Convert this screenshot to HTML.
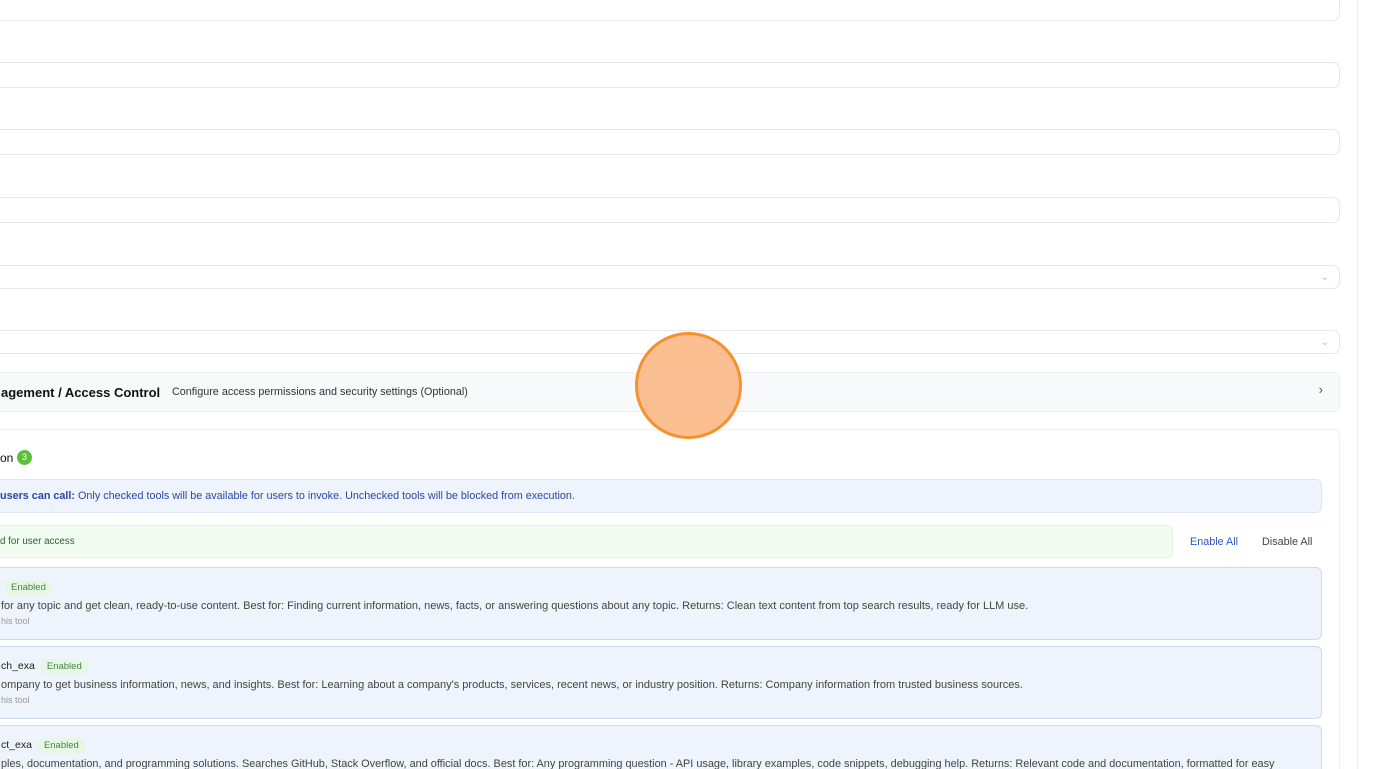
<!DOCTYPE html>
<html style="width:1376px;height:769px;overflow:hidden"><head><meta charset="utf-8"><style>
*{box-sizing:border-box;margin:0;padding:0}
body{width:1376px;height:769px;overflow:hidden;background:#fff;font-family:"Liberation Sans",Helvetica,Arial,sans-serif;position:relative;color:#111}
.a{position:absolute}
.inp{position:absolute;left:-10px;width:1350px;border:1px solid #e8e8ea;border-radius:7px;background:#fff}
.chev{position:absolute;right:10px;top:6px;color:#bbb;font-size:10px}
.tool{position:absolute;left:-10px;width:1332px;background:#eef3fc;border:1px solid #cbdaf2;border-radius:6px;height:73px}
.t1{position:absolute;left:10px;top:12px;font-size:10.5px;color:#222}
.badge{display:inline-block;background:#e8f6e6;color:#3d8a3d;font-size:9.5px;padding:2px 6px;border-radius:4px;margin-left:6px}
.t2{position:absolute;left:10px;top:32px;font-size:11px;color:#444;white-space:nowrap}
.t3{position:absolute;left:10px;top:48px;font-size:9px;color:#999}
</style></head><body>
<div class="a" style="left:1357px;top:0;width:1px;height:769px;background:#eee"></div>
<div class="inp" style="top:-10px;height:31px"></div>
<div class="inp" style="top:62px;height:26px"></div>
<div class="inp" style="top:129px;height:26px"></div>
<div class="inp" style="top:197px;height:26px"></div>
<div class="inp" style="top:265px;height:24px"><span class="chev">&#8964;</span></div>
<div class="inp" style="top:330px;height:24px"><span class="chev">&#8964;</span></div>
<div class="inp" style="top:372px;height:40px;background:#f8f9fb;border-color:#eceef1">
<span class="a" style="left:10px;top:12px;font-size:13px;font-weight:bold;color:#111">agement / Access Control</span>
<span class="a" style="left:181px;top:13px;font-size:10.8px;color:#333">Configure access permissions and security settings (Optional)</span>
<span class="a" style="right:16px;top:9px;font-size:13px;color:#555">&#8250;</span>
</div>
<div class="inp" style="top:429px;height:340px;border-color:#eceef1;border-bottom:none;border-radius:7px 7px 0 0"></div>
<div class="a" style="left:0;top:451px;font-size:12px;color:#111">on</div>
<div class="a" style="left:17px;top:450px;width:15px;height:15px;border-radius:50%;background:#5cbf3c;color:#fff;font-size:9px;text-align:center;line-height:15px">3</div>
<div class="a" style="left:-10px;top:479px;width:1332px;height:34px;background:#eef3fd;border:1px solid #dde6f6;border-radius:6px"></div>
<div class="a" style="left:0;top:490px;font-size:10.8px;color:#2a47a8;white-space:nowrap"><b>users can call:</b> Only checked tools will be available for users to invoke. Unchecked tools will be blocked from execution.</div>
<div class="a" style="left:-10px;top:525px;width:1183px;height:33px;background:#f1fbf1;border:1px solid #e3f3e3;border-radius:6px"></div>
<div class="a" style="left:0;top:536px;font-size:9.8px;color:#2f5f2f">d for user access</div>
<div class="a" style="left:1190px;top:536px;font-size:10.8px;color:#3355bb">Enable All</div>
<div class="a" style="left:1262px;top:536px;font-size:10.8px;color:#444">Disable All</div>
<div class="tool" style="top:567px"><div class="t1" style="left:0"><span class="badge" style="margin-left:14px">Enabled</span></div><div class="t2">for any topic and get clean, ready-to-use content. Best for: Finding current information, news, facts, or answering questions about any topic. Returns: Clean text content from top search results, ready for LLM use.</div><div class="t3">his tool</div></div>
<div class="tool" style="top:646px"><div class="t1">ch_exa<span class="badge">Enabled</span></div><div class="t2">ompany to get business information, news, and insights. Best for: Learning about a company's products, services, recent news, or industry position. Returns: Company information from trusted business sources.</div><div class="t3">his tool</div></div>
<div class="tool" style="top:725px;height:44px;border-bottom:none;border-radius:6px 6px 0 0"><div class="t1">ct_exa<span class="badge">Enabled</span></div><div class="t2" style="font-size:10.9px">ples, documentation, and programming solutions. Searches GitHub, Stack Overflow, and official docs. Best for: Any programming question - API usage, library examples, code snippets, debugging help. Returns: Relevant code and documentation, formatted for easy</div></div>
<div class="a" style="left:635px;top:332px;width:107px;height:107px;border-radius:50%;background:rgba(250,170,110,.75);border:3px solid #f5912f"></div>
</body></html>
